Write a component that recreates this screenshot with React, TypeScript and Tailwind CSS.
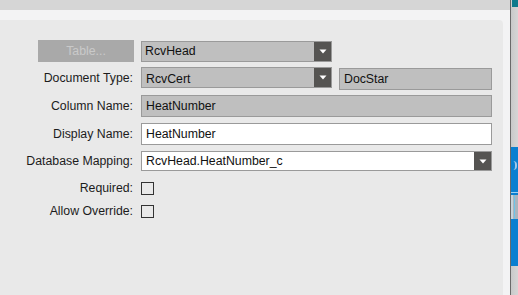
import React from "react";

const font = { fontFamily: '"Liberation Sans", Arial, sans-serif' };

function Arrow() {
  return (
    <svg width="8" height="5" viewBox="0 0 8 5" className="block">
      <polygon points="0.5,0.5 7.5,0.5 4,4.5" fill="#ffffff" />
    </svg>
  );
}

function DropBtn() {
  return (
    <div className="flex h-full w-[17px] items-center justify-center bg-[#555452]">
      <Arrow />
    </div>
  );
}

function Label({ children }: { children: React.ReactNode }) {
  return (
    <div className="w-[133px] shrink-0 text-right text-[12.3px] leading-none text-[#1c1c1c]">
      {children}
    </div>
  );
}

export default function App() {
  return (
    <div className="flex h-[295px] w-[518px] overflow-hidden bg-[#f3f3f4]" style={font}>
      <div className="flex w-[510px] flex-col">
        <div className="h-[10px] bg-[#d6d6d6]" />
        <div className="h-[10px] bg-[#f3f3f4]" />
        <div className="flex flex-1">
          <div className="flex flex-1 flex-col rounded-tr-[4px] bg-[#e9e9e9] pt-[20px]">
            {/* Row 1 */}
            <div className="flex h-[22px] items-center">
              <div className="ml-[38px] flex h-[22px] w-[96px] items-center justify-center bg-[#a9a9a9] text-[12.3px] text-[#c9c9c9]">
                Table...
              </div>
              <div className="ml-[7px] flex h-[21px] w-[191px] items-stretch border border-[#9a9a9a] bg-[#bfbfbf]">
                <div className="flex flex-1 items-center pl-[3px] text-[12.3px] text-[#111]">RcvHead</div>
                <DropBtn />
              </div>
            </div>
            {/* Row 2 */}
            <div className="mt-[5px] flex h-[23px] items-center">
              <Label>Document Type:</Label>
              <div className="ml-[8px] flex h-[21px] w-[191px] items-stretch self-start border border-[#9a9a9a] bg-[#bfbfbf]">
                <div className="flex flex-1 items-start pl-[4px] pt-[2px] text-[12.3px] text-[#111]">RcvCert</div>
                <DropBtn />
              </div>
              <div className="ml-[7px] flex h-[22px] w-[153px] items-center self-end border border-[#9a9a9a] bg-[#bfbfbf] pl-[4px] text-[12.3px] text-[#111]">
                DocStar
              </div>
            </div>
            {/* Row 3 */}
            <div className="mt-[5px] flex h-[22px] items-center">
              <Label>Column Name:</Label>
              <div className="ml-[8px] flex h-[22px] w-[351px] items-center border border-[#9a9a9a] bg-[#bfbfbf] pl-[4px] text-[12.3px] text-[#111]">
                HeatNumber
              </div>
            </div>
            {/* Row 4 */}
            <div className="mt-[6px] flex h-[22px] items-center">
              <Label>Display Name:</Label>
              <div className="ml-[8px] flex h-[22px] w-[351px] items-center border border-[#9a9a9a] bg-white pl-[4px] text-[12.3px] text-[#111]">
                HeatNumber
              </div>
            </div>
            {/* Row 5 */}
            <div className="mt-[6px] flex h-[20px] items-center">
              <Label>Database Mapping:</Label>
              <div className="ml-[8px] flex h-[20px] w-[351px] items-stretch border border-[#9a9a9a] bg-white">
                <div className="flex flex-1 items-center pl-[4px] text-[12.3px] text-[#111]">RcvHead.HeatNumber_c</div>
                <DropBtn />
              </div>
            </div>
            {/* Row 6 */}
            <div className="mt-[11px] flex h-[13px] items-center">
              <Label>Required:</Label>
              <div className="ml-[8px] h-[13px] w-[13px] border border-[#333] bg-[#e9e9e9]" />
            </div>
            {/* Row 7 */}
            <div className="mt-[10px] flex h-[13px] items-center">
              <Label>Allow Override:</Label>
              <div className="ml-[8px] h-[13px] w-[13px] border border-[#333] bg-[#e9e9e9]" />
            </div>
          </div>
          <div className="w-[7px] bg-[#f3f3f4]" />
        </div>
      </div>
      <div className="flex w-[8px] flex-col border-l border-[#6a6a6a] bg-[#cfcfcf]">
        <div className="ml-[1px] h-[7px] bg-[#0f7a8c]" />
        <div className="h-[140px] bg-gradient-to-r from-[#c9c9c9] to-[#d6d6d6]" />
        <div className="flex h-[119px] flex-col bg-[#0a7fd0]">
          <div className="mt-[14px] h-[9px] w-[4px] ml-[2px] rounded-r-full border-r-2 border-[#9fc7ea]" />
          <div className="mt-[22px] h-[1px] bg-[#9fd0f0]" />
          <div className="mt-[2px] flex h-[24px] gap-[1px] bg-[#aab4bd]">
            <div className="w-[2px] bg-[#c9d3da]" />
            <div className="w-[1px] bg-[#6ec4ea]" />
          </div>
        </div>
        <div className="flex-1 bg-gradient-to-r from-[#c9c9c9] to-[#d6d6d6]" />
      </div>
    </div>
  );
}
